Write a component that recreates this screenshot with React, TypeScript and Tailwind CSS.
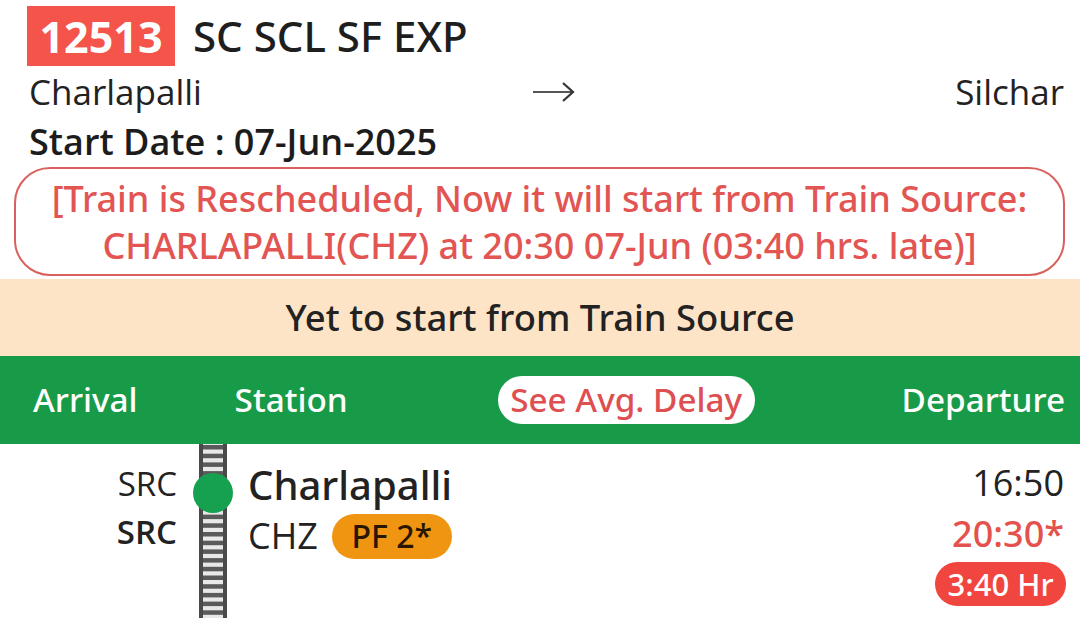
import React from "react";

function Track() {
  const ties = [];
  for (let y = 1; y < 180; y += 8.7) {
    ties.push(<rect key={y} x={3} y={y} width={22} height={4.5} fill="#5a5a5a" />);
  }
  return (
    <svg width="28" height="175" viewBox="0 0 28 175" className="block">
      <rect x={0} y={0} width={28} height={175} fill="#e8e8e8" />
      {ties}
      <rect x={0} y={0} width={4} height={175} fill="#4a4a4a" />
      <rect x={24} y={0} width={4} height={175} fill="#4a4a4a" />
    </svg>
  );
}

export default function App() {
  return (
    <div
      className="w-[1080px] h-[618px] overflow-hidden bg-white text-[#222]"
      style={{ fontFamily: "'Open Sans', 'Noto Sans', sans-serif" }}
    >
      {/* Title */}
      <div className="flex items-center h-[72px] pl-[27px]">
        <div className="h-[60px] w-[148px] bg-[#f4544a] text-white font-bold text-[43px] flex items-center justify-center leading-none">
          12513
        </div>
        <div className="ml-[18px] text-[42px] font-medium leading-none text-[#1e1e1e] font-['Noto_Sans',sans-serif]">
          SC SCL SF EXP
        </div>
      </div>
      {/* Route */}
      <div className="flex items-center h-[44px] pl-[29px] pr-[16px] text-[35px] leading-none -mt-[3px] mb-[3px]">
        <span className="w-[503px]">Charlapalli</span>
        <svg width="44" height="22" viewBox="0 0 44 22" className="mt-[2px]">
          <line x1="1" y1="11" x2="41" y2="11" stroke="#555" strokeWidth="2" />
          <polyline points="31,2 41,11 31,20" fill="none" stroke="#333" strokeWidth="2.2" />
        </svg>
        <span className="flex-1 text-right">Silchar</span>
      </div>
      {/* Start date */}
      <div className="h-[51px] px-[29px] flex items-center text-[36px] font-semibold leading-none text-[#1c1c1c]">
        Start Date : 07-Jun-2025
      </div>
      {/* Alert */}
      <div className="mx-[14px] w-[1051px] h-[109px] border-2 border-[#d9605d] rounded-[36px] flex flex-col items-center justify-center text-[#e25552] text-[36px] font-medium leading-[47px] font-['Noto_Sans',sans-serif]">
        <div>[Train is Rescheduled, Now it will start from Train Source:</div>
        <div>CHARLAPALLI(CHZ) at 20:30 07-Jun (03:40 hrs. late)]</div>
      </div>
      {/* Beige */}
      <div className="mt-[3px] h-[77px] bg-[#fde4c6] flex items-center justify-center text-[36.4px] font-medium leading-none text-[#222] font-['Noto_Sans',sans-serif]">
        Yet to start from Train Source
      </div>
      {/* Green header */}
      <div className="h-[88px] bg-[#189b49] flex items-center text-white text-[33.3px] font-medium leading-none font-['Noto_Sans',sans-serif]">
        <span className="ml-[33px]">Arrival</span>
        <span className="ml-[97px]">Station</span>
        <span className="ml-[150px] h-[48px] w-[257px] bg-white rounded-full flex items-center justify-center text-[#de4f52]">
          See Avg. Delay
        </span>
        <span className="ml-auto mr-[15px]">Departure</span>
      </div>
      {/* Station row */}
      <div className="flex h-[175px]">
        <div className="w-[177px] flex flex-col items-end pt-[15px] text-[33px] leading-none">
          <span className="h-[48px] flex items-center">SRC</span>
          <span className="h-[48px] flex items-center font-semibold">SRC</span>
        </div>
        <div className="relative ml-[22px] w-[28px]">
          <Track />
          <div className="absolute left-[-6px] top-[29px] w-[40px] h-[40px] rounded-full bg-[#16a150]" />
        </div>
        <div className="ml-[21px] flex flex-col pt-[17px] leading-none">
          <span className="h-[48px] flex items-center text-[40px] font-medium font-['Noto_Sans',sans-serif]">Charlapalli</span>
          <div className="h-[54px] flex items-center">
            <span className="text-[36px]">CHZ</span>
            <span className="ml-[14px] h-[45px] w-[120px] rounded-full bg-[#f09511] flex items-center justify-center text-[32px] font-medium text-[#2a1600] font-['Noto_Sans',sans-serif]">
              PF 2*
            </span>
          </div>
        </div>
        <div className="ml-auto mr-[16px] flex flex-col items-end pt-[16px] leading-none">
          <span className="h-[46px] flex items-center text-[36px]">16:50</span>
          <span className="h-[55px] flex items-center text-[36px] font-medium text-[#e5514c] font-['Noto_Sans',sans-serif]">20:30*</span>
          <span className="mt-[1px] -mr-[2px] h-[44px] w-[131px] rounded-full bg-[#f1463f] flex items-center justify-center text-white text-[31px] font-medium font-['Noto_Sans',sans-serif]">
            3:40 Hr
          </span>
        </div>
      </div>
    </div>
  );
}
